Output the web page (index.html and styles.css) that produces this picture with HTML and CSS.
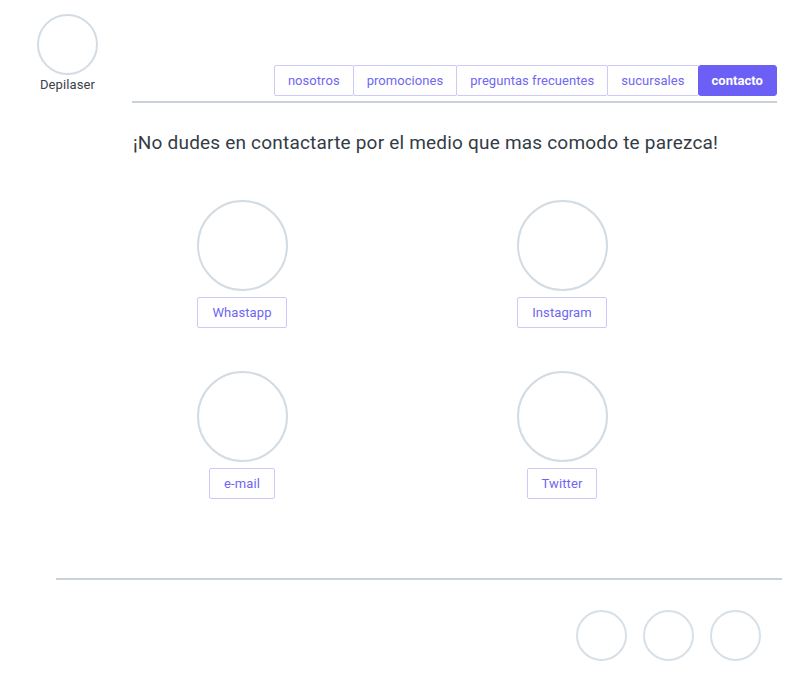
FILE: index.html
```html
<!DOCTYPE html>
<html lang="es">
<head>
<meta charset="utf-8">
<title>Depilaser - contacto</title>
<link rel="stylesheet" href="styles.css">
</head>
<body>
<header class="header">
  <div class="brand">
    <div class="brand-logo"></div>
    <div class="brand-name">Depilaser</div>
  </div>
  <div class="nav-wrap">
    <nav class="nav">
      <a class="nav-item">nosotros</a>
      <a class="nav-item">promociones</a>
      <a class="nav-item">preguntas frecuentes</a>
      <a class="nav-item">sucursales</a>
      <a class="nav-item nav-item-active">contacto</a>
    </nav>
  </div>
</header>
<main class="main">
  <h1 class="title">¡No dudes en contactarte por el medio que mas comodo te parezca!</h1>
  <section class="contacts">
    <div class="contact">
      <div class="contact-icon"></div>
      <a class="contact-btn">Whastapp</a>
    </div>
    <div class="contact">
      <div class="contact-icon"></div>
      <a class="contact-btn">Instagram</a>
    </div>
    <div class="contact">
      <div class="contact-icon"></div>
      <a class="contact-btn">e-mail</a>
    </div>
    <div class="contact">
      <div class="contact-icon"></div>
      <a class="contact-btn">Twitter</a>
    </div>
  </section>
</main>
<footer class="footer">
  <div class="footer-icons">
    <div class="footer-icon"></div>
    <div class="footer-icon"></div>
    <div class="footer-icon"></div>
  </div>
</footer>
</body>
</html>
```
FILE: styles.css
```css
* { box-sizing: border-box; }
html, body { margin: 0; padding: 0; background: #ffffff; }
body {
  font-family: "Roboto", "Liberation Sans", sans-serif;
  color: #343b45;
  width: 810px;
  height: 693px;
  overflow: hidden;
}
.header {
  display: flex;
  align-items: flex-start;
}
.brand {
  margin-left: 37px;
  padding-top: 14px;
  width: 61px;
  display: flex;
  flex-direction: column;
  align-items: center;
}
.brand-logo {
  width: 61px;
  height: 61px;
  border: 2px solid #d3dbe3;
  border-radius: 50%;
}
.brand-name {
  margin-top: 2px;
  font-size: 13px;
  line-height: 15px;
  color: #3a414b;
  letter-spacing: 0.1px;
}
.nav-wrap {
  flex: 1;
  margin-left: 34px;
  margin-right: 33px;
  height: 103px;
  border-bottom: 2px solid #c9d1da;
  display: flex;
  justify-content: flex-end;
  align-items: flex-end;
  padding-bottom: 5px;
}
.nav {
  display: flex;
}
.nav-item {
  display: block;
  height: 31px;
  line-height: 29px;
  padding: 0 13px;
  border: 1px solid #cdc9fd;
  margin-left: -1px;
  font-size: 13px;
  letter-spacing: 0.05px;
  color: #6f66f2;
  border-radius: 2px;
}
.nav-item-active {
  background: #6c5ff5;
  border-color: #6c5ff5;
  color: #ffffff;
  font-weight: 700;
  border-radius: 3px;
}
.main {
  padding-left: 133px;
}
.title {
  margin: 28px 0 0 0;
  font-size: 19px;
  line-height: 24px;
  font-weight: 400;
  letter-spacing: 0.2px;
  color: #343b45;
}
.contacts {
  margin-left: -51px;
  margin-top: 45px;
  display: grid;
  grid-template-columns: 320px 320px;
  row-gap: 43px;
}
.contact {
  display: flex;
  flex-direction: column;
  align-items: center;
}
.contact-icon {
  width: 91px;
  height: 91px;
  border: 2px solid #d3dbe3;
  border-radius: 50%;
}
.contact-btn {
  margin-top: 6px;
  height: 31px;
  line-height: 29px;
  padding: 0 14px;
  border: 1px solid #cdc9fd;
  border-radius: 2px;
  font-size: 13px;
  letter-spacing: 0.1px;
  color: #6f66f2;
}
.footer {
  margin: 79px 28px 0 56px;
  border-top: 2px solid #c9d1da;
  padding-top: 30px;
  padding-right: 21px;
}
.footer-icons {
  display: flex;
  justify-content: flex-end;
  gap: 16px;
}
.footer-icon {
  width: 51px;
  height: 51px;
  border: 2px solid #d8e0e7;
  border-radius: 50%;
}
```
